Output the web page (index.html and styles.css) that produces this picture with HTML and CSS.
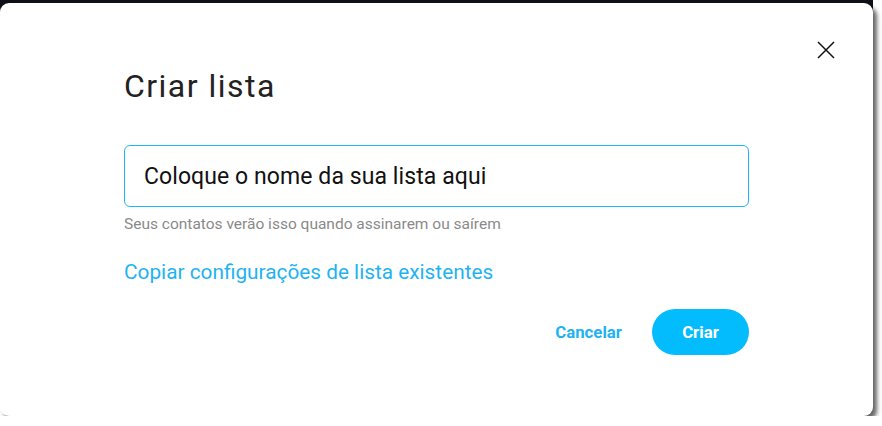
FILE: index.html
```html
<!DOCTYPE html>
<html lang="pt-BR">
<head>
<meta charset="utf-8">
<title>Criar lista</title>
<link rel="stylesheet" href="styles.css">
</head>
<body>
<div class="backdrop">
  <div class="dialog">
    <button class="close" aria-label="Fechar">
      <svg width="18" height="18" viewBox="0 0 18 18"><path d="M1 1L17 17M17 1L1 17" stroke="#111" stroke-width="1.5" fill="none"/></svg>
    </button>
    <h1 class="title">Criar lista</h1>
    <div class="field">Coloque o nome da sua lista aqui</div>
    <p class="hint">Seus contatos verão isso quando assinarem ou saírem</p>
    <a class="copy-link" href="#">Copiar configurações de lista existentes</a>
    <div class="actions">
      <button class="btn-text">Cancelar</button>
      <button class="btn-primary">Criar</button>
    </div>
  </div>
</div>
</body>
</html>
```
FILE: styles.css
```css
html, body {
  margin: 0;
  padding: 0;
  background: #ffffff;
  font-family: Roboto, "Liberation Sans", sans-serif;
}
.backdrop {
  width: 873px;
  padding-top: 3px;
  background: linear-gradient(#0d1117 0, #0d1117 12px, transparent 12px);
}
.dialog {
  position: relative;
  box-sizing: border-box;
  height: 413px;
  background: #ffffff;
  border-radius: 9px;
  box-shadow: 4px 4px 4px rgba(0, 0, 0, 0.6);
  padding: 63px 124px 0 124px;
  display: flex;
  flex-direction: column;
}
.close {
  position: absolute;
  top: 38px;
  right: 38px;
  width: 18px;
  height: 18px;
  padding: 0;
  border: 0;
  background: none;
  display: flex;
}
.title {
  margin: 0 0 39px 0;
  font-size: 32px;
  line-height: 40px;
  font-weight: 400;
  letter-spacing: 0.046em;
  color: #222222;
}
.field {
  box-sizing: border-box;
  height: 62px;
  border: 1px solid #1cb8f4;
  border-radius: 6px;
  padding: 0 19px;
  display: flex;
  align-items: center;
  font-size: 23px;
  letter-spacing: 0.08px;
  color: #111111;
}
.hint {
  margin: 7px 0 0 0;
  font-size: 15.5px;
  line-height: 20px;
  color: #8a8a8a;
}
.copy-link {
  margin-top: 26px;
  font-size: 20.8px;
  line-height: 24px;
  color: #1fb3f2;
  text-decoration: none;
  align-self: flex-start;
}
.actions {
  margin-top: 25px;
  display: flex;
  justify-content: flex-end;
  align-items: center;
  gap: 30px;
}
.btn-text {
  border: 0;
  background: none;
  padding: 0;
  font-family: inherit;
  font-size: 16.8px;
  font-weight: 700;
  color: #1fb3f2;
}
.btn-primary {
  width: 97px;
  height: 46px;
  border: 0;
  border-radius: 23px;
  background: #03bcfd;
  color: #ffffff;
  font-family: inherit;
  font-size: 16.8px;
  font-weight: 700;
}
```
